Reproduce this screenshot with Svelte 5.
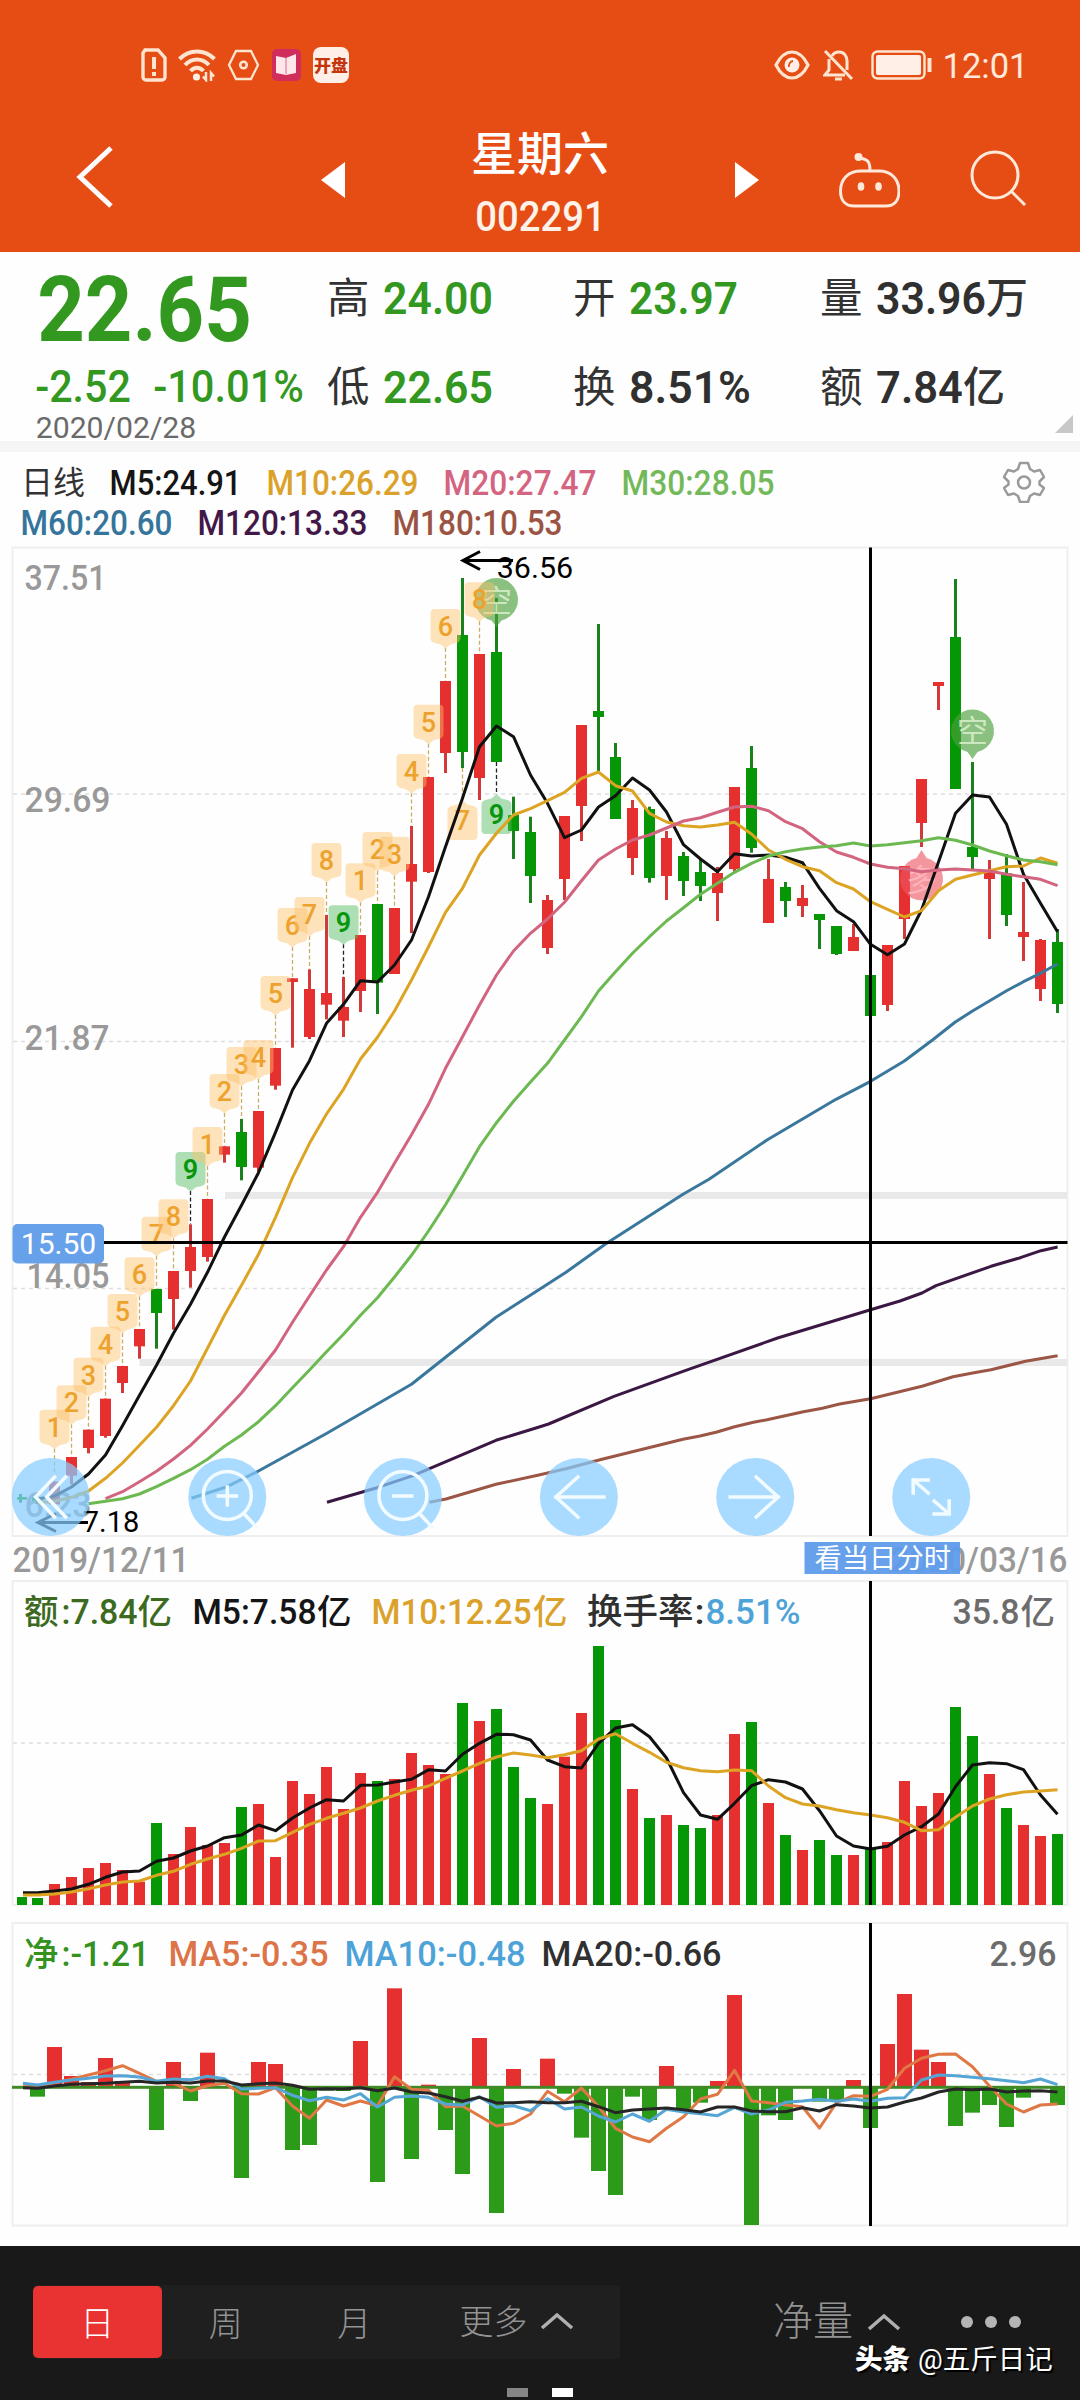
<script>
  // Horizontal slot of trading day i, shared by all three panels
  const X = (i) => 20.5 + 17 * i;
  const barX = (i, w) => Math.max(17, X(i) - w / 2);
  const barW = (i, w) => X(i) + w / 2 - barX(i, w) + (i === 0 ? 1 : 0);
  const line = (values, start = 0) =>
    values.map((v, k) => `${Math.max(23, X(k + start)).toFixed(1)},${(v / 3).toFixed(1)}`).join(' ');
  const path = (pts) => pts.map(([x, v]) => `${x},${(v / 3).toFixed(1)}`).join(' ');

  // [direction, high, body top, body bottom, low] in third-pixels below the panel top
  const candles = [
    ['g', 2862, 2871, 2879, 2888], ['g', 2868, 2872, 2882, 2892], ['r', 2825, 2825, 2893, 2893],
    ['r', 2751, 2751, 2807, 2833], ['r', 2669, 2669, 2724, 2740], ['r', 2576, 2576, 2688, 2693],
    ['r', 2478, 2478, 2529, 2559], ['r', 2367, 2367, 2419, 2456], ['g', 2247, 2247, 2319, 2426],
    ['r', 2193, 2193, 2277, 2369], ['r', 2053, 2121, 2193, 2243], ['r', 1977, 1977, 2151, 2165],
    ['r', 1819, 1819, 1844, 1868], ['g', 1737, 1776, 1881, 1921], ['r', 1713, 1713, 1883, 1895],
    ['r', 1524, 1524, 1637, 1649], ['r', 1315, 1315, 1326, 1523], ['r', 1288, 1347, 1491, 1497],
    ['r', 1125, 1359, 1394, 1438], ['r', 1311, 1401, 1442, 1491], ['r', 1185, 1185, 1353, 1416],
    ['g', 1092, 1092, 1328, 1422], ['r', 1104, 1104, 1302, 1302], ['r', 858, 972, 1025, 1179],
    ['r', 711, 711, 996, 999], ['r', 423, 423, 639, 699], ['g', 114, 285, 636, 684],
    ['r', 342, 342, 714, 780], ['g', 174, 336, 666, 666], ['g', 770, 825, 873, 957],
    ['g', 830, 876, 1008, 1089], ['r', 1065, 1080, 1224, 1242], ['r', 828, 828, 1017, 1080],
    ['r', 555, 555, 798, 903], ['g', 252, 513, 531, 695], ['g', 609, 651, 837, 837],
    ['r', 780, 804, 954, 1005], ['g', 800, 807, 1014, 1028], ['r', 873, 894, 1008, 1080],
    ['g', 936, 948, 1023, 1068], ['g', 960, 996, 1038, 1083], ['r', 981, 999, 1059, 1143],
    ['r', 741, 741, 987, 995], ['g', 618, 684, 924, 938], ['r', 957, 1017, 1149, 1149],
    ['g', 1026, 1041, 1083, 1131], ['r', 1035, 1074, 1098, 1131], ['g', 1122, 1122, 1140, 1227],
    ['g', 1158, 1158, 1242, 1245], ['r', 1152, 1191, 1233, 1233], ['g', 1305, 1305, 1428, 1428],
    ['r', 1215, 1215, 1395, 1413], ['r', 978, 978, 1137, 1197], ['r', 717, 717, 849, 921],
    ['r', 426, 426, 438, 510], ['g', 117, 291, 747, 747], ['g', 666, 921, 951, 990],
    ['r', 960, 995, 1017, 1197], ['g', 942, 1000, 1125, 1158], ['r', 1026, 1176, 1191, 1263],
    ['r', 1197, 1200, 1347, 1383], ['g', 1167, 1206, 1392, 1419]
  ];

  const ma5 = [2877, 2868, 2841, 2802, 2745, 2657, 2566, 2476, 2380, 2293, 2197, 2091, 1996, 1898, 1777, 1650, 1562, 1450, 1393, 1322, 1326, 1275, 1200, 1070, 920, 775, 620, 558, 590, 705, 790, 893, 870, 801, 767, 714, 750, 816, 914, 957, 995, 941, 948, 945, 952, 968, 1045, 1112, 1145, 1213, 1244, 1212, 1110, 966, 820, 765, 771, 853, 1003, 1090, 1175];
  const ma10 = [2888, 2884, 2872, 2853, 2815, 2769, 2716, 2662, 2597, 2523, 2425, 2326, 2236, 2143, 2032, 1913, 1810, 1722, 1648, 1557, 1492, 1413, 1320, 1220, 1117, 1045, 945, 880, 825, 806, 782, 757, 715, 696, 737, 753, 820, 846, 857, 861, 855, 847, 882, 930, 958, 980, 992, 1028, 1047, 1085, 1108, 1131, 1112, 1052, 1018, 1005, 992, 980, 978, 954, 970];
  const ma20 = [2876, 2855, 2825, 2794, 2757, 2716, 2667, 2614, 2559, 2495, 2430, 2347, 2268, 2190, 2120, 2032, 1957, 1870, 1784, 1693, 1585, 1490, 1395, 1305, 1233, 1180, 1137, 1087, 1022, 960, 927, 900, 885, 864, 843, 833, 817, 801, 799, 812, 845, 866, 905, 936, 952, 972, 982, 986, 995, 990, 987, 990, 993, 1003, 1010, 1018, 1037];
  const ma30 = [2891, 2884, 2876, 2862, 2840, 2815, 2789, 2758, 2719, 2685, 2645, 2597, 2543, 2490, 2435, 2383, 2326, 2273, 2211, 2146, 2073, 1994, 1908, 1820, 1748, 1684, 1626, 1570, 1500, 1430, 1353, 1295, 1240, 1190, 1143, 1103, 1063, 1030, 997, 970, 948, 935, 927, 921, 917, 909, 918, 914, 908, 902, 893, 901, 915, 933, 947, 960, 965, 974];
  const ma60 = [[191.5, 2875], [227, 2840], [258, 2794], [326, 2681], [411.5, 2533], [496, 2332], [540, 2247], [566, 2197], [605.5, 2112], [683, 1963], [709, 1918], [767, 1800], [836, 1678], [870.6, 1624], [904, 1564], [932.5, 1500], [955.3, 1446], [972.5, 1413], [1006.6, 1352], [1023.5, 1325], [1040.4, 1300], [1057.6, 1272]];
  const ma120 = [[327, 2887], [377, 2843], [413, 2807], [496, 2701], [540, 2660], [548.6, 2652], [614, 2569], [683, 2494], [777.6, 2394], [870.6, 2309], [900, 2283], [922, 2259], [936, 2237], [991, 2179], [1020.4, 2153], [1041, 2132], [1057.6, 2121]];
  const ma180 = [[429.4, 2887], [446, 2877], [496, 2833], [540, 2804], [566, 2786], [602, 2758], [683, 2698], [700, 2688], [717, 2676], [734.6, 2660], [753.5, 2647], [767, 2639], [803.4, 2615], [822.4, 2605], [839.6, 2592], [870.6, 2576], [922, 2539], [953, 2510], [974, 2498], [991, 2489], [1025.5, 2464], [1057.6, 2447]];

  // [day, label, top of the tag]
  const tags = [
    [2, 1, 2609], [3, 2, 2536], [4, 3, 2453], [5, 4, 2360], [6, 5, 2262], [7, 6, 2152], [8, 7, 2030], [9, 8, 1978], [10, 9, 1836],
    [11, 1, 1761], [12, 2, 1602], [13, 3, 1521], [14, 4, 1500], [15, 5, 1308], [16, 6, 1104], [17, 7, 1071], [18, 8, 909], [19, 9, 1096],
    [20, 1, 970], [21, 2, 876], [22, 3, 890], [23, 4, 642], [24, 5, 494], [25, 6, 207], [27, 8, 127]
  ];
  const lowTags = [[26, 7, 780], [28, 9, 762]];

  const volume = [981, 984, 942, 921, 894, 879, 900, 935, 759, 852, 771, 825, 819, 711, 702, 861, 633, 672, 591, 717, 609, 633, 627, 549, 585, 612, 399, 453, 417, 591, 684, 702, 560, 429, 228, 450, 657, 744, 735, 765, 774, 735, 492, 456, 699, 795, 840, 810, 855, 855, 835, 816, 633, 708, 669, 411, 498, 612, 714, 765, 798, 792];
  const vol5 = [968, 968, 963, 957, 943, 922, 906, 903, 874, 864, 843, 828, 803, 795, 765, 782, 744, 714, 689, 693, 646, 645, 636, 628, 599, 603, 553, 520, 493, 494, 510, 570, 590, 594, 520, 474, 464, 500, 564, 668, 735, 748, 700, 647, 629, 636, 657, 722, 798, 828, 837, 829, 795, 770, 732, 650, 585, 578, 581, 599, 675, 733];
  const vol10 = [975, 975, 972, 966, 956, 945, 936, 933, 916, 904, 883, 867, 853, 835, 813, 812, 787, 763, 745, 730, 714, 693, 676, 661, 648, 625, 603, 580, 561, 549, 555, 563, 554, 542, 507, 491, 520, 547, 577, 593, 602, 605, 600, 602, 648, 683, 702, 708, 719, 728, 735, 743, 757, 782, 779, 742, 708, 687, 674, 666, 663, 659];

  // Outer edge of each net-flow bar; the zero axis sits at 532
  const ZERO = 532;
  const net = [532, 560, 411, 498, 516, 444, 513, 532, 660, 456, 573, 428, 532, 804, 456, 462, 720, 705, 542, 543, 393, 816, 235, 747, 524, 660, 792, 384, 909, 477, 532, 446, 551, 683, 783, 855, 560, 630, 468, 600, 578, 513, 255, 945, 616, 630, 532, 575, 575, 510, 654, 402, 252, 419, 456, 648, 608, 585, 651, 563, 532, 585];
  const net5 = [522, 528, 518, 508, 495, 482, 467, 490, 514, 520, 543, 527, 520, 551, 552, 533, 588, 625, 570, 588, 573, 587, 500, 538, 541, 590, 588, 618, 648, 640, 612, 544, 575, 534, 590, 655, 681, 695, 655, 620, 567, 553, 481, 573, 578, 585, 590, 654, 578, 557, 559, 538, 475, 445, 433, 432, 470, 528, 582, 606, 585, 582];
  const net10 = [520, 525, 517, 510, 505, 498, 497, 501, 514, 507, 509, 499, 506, 537, 535, 533, 556, 572, 562, 570, 551, 591, 562, 558, 562, 582, 585, 560, 592, 587, 602, 566, 597, 591, 618, 636, 612, 634, 598, 606, 611, 617, 592, 612, 600, 577, 573, 568, 574, 567, 574, 565, 563, 510, 495, 497, 502, 506, 512, 518, 507, 524];
  const net20 = [533, 535, 528, 523, 521, 520, 517, 514, 519, 517, 519, 513, 513, 525, 521, 519, 526, 538, 536, 537, 533, 542, 534, 546, 549, 560, 574, 562, 579, 578, 575, 578, 578, 574, 590, 608, 600, 597, 594, 599, 606, 591, 591, 603, 605, 605, 593, 603, 584, 588, 594, 591, 576, 564, 546, 537, 539, 537, 546, 543, 542, 546];

  const CAP = 0.711;
  const stats = [
    { label: '高', value: '24.00', w: 106, tone: 'down' },
    { label: '开', value: '23.97', w: 105, tone: 'down' },
    { label: '量', value: '33.96', w: 106, unit: '万', tone: 'dark' },
    { label: '低', value: '22.65', w: 106, tone: 'down' },
    { label: '换', value: '8.51%', w: 118, tone: 'dark' },
    { label: '额', value: '7.84', w: 83, unit: '亿', tone: 'dark' }
  ];
  const legend1 = [['M5:24.91', 129, 'c-black'], ['M10:26.29', 149, 'c-gold'], ['M20:27.47', 150, 'c-pink'], ['M30:28.05', 150, 'c-lime']];
  const legend2 = [['M60:20.60', 149, 'c-blue'], ['M120:13.33', 167, 'c-plum'], ['M180:10.53', 167, 'c-brown']];
  const buttons = [50.6, 227.3, 402.9, 578.9, 755.2, 931.2];
</script>

<!-- Text in flow, sized by its cap height and fitted to a width; side bearings hang outside the box -->
{#snippet fit(str, w, cap, cls)}
  <svg class="fit {cls}" width={w} height={cap}>
    <text x={-cap * 0.06} y={cap} font-size={cap / CAP} textLength={w + cap * 0.12} lengthAdjust="spacingAndGlyphs">{str}</text>
  </svg>
{/snippet}

<!-- Text on a chart, x and baseline given -->
{#snippet label(str, x, y, w, cap, cls)}
  <text class={cls} x={x - cap * 0.06} {y} font-size={cap / CAP} textLength={w + cap * 0.12} lengthAdjust="spacingAndGlyphs">{str}</text>
{/snippet}

{#snippet han(str, x, y, size, cls)}
  <text class={cls} {x} {y} font-size={size}>{str}</text>
{/snippet}

<div class="screen">
  <header>
    <div class="status">
      <div class="group">
        <svg width="26" height="34" viewBox="0 0 26 34" class="ico"><path d="M4 2h13l7 8v19a3 3 0 0 1-3 3H5a3 3 0 0 1-3-3V5z" stroke-width="3.400" /><path d="M13 9v12M13 24v4" stroke-width="4" /></svg>
        <svg width="38" height="34" viewBox="0 0 38 34" class="ico"><path d="M1.500 11c10-10 25-10 35 0M7 17c7-7.500 17-7.500 24 0M12.500 23c4-4.500 9-4.500 13 0" stroke-width="4" /><circle cx="18.500" cy="29" r="3.600" class="solid" /><path d="M28 24v8l-3-3.500M33 33v-8l3 3.500" stroke-width="2.500" /></svg>
        <svg width="33" height="34" viewBox="0 0 33 34" class="ico"><path d="M9 3h15l7 14-7 14H9L2 17z" stroke-width="2.300" /><circle cx="16.500" cy="17" r="3.300" stroke-width="2.600" /></svg>
        <svg width="31" height="34" viewBox="0 0 31 34"><rect x="1" y="1" width="29" height="32" rx="5" fill="#d02c5c" /><path d="M5 8l10 2 10-4v19l-10 2-10-2z" fill="#ffe6ea" /><path d="M15 10v16" stroke="#e590a8" stroke-width="1.500" /></svg>
        <div class="app">开盘</div>
      </div>
      <div class="group right">
        <svg width="36" height="30" viewBox="0 0 36 30" class="ico eye"><path d="M2 15C7 5 12 2 18 2s11 3 16 13C29 25 24 28 18 28S7 25 2 15z" stroke-width="3.200" /><circle cx="18" cy="15" r="7.500" class="solid" /><path d="M15 17a5 5 0 0 1 4-6" stroke="#e54d14" stroke-width="1.800" /></svg>
        <svg width="31" height="34" viewBox="0 0 31 34" class="ico bell"><path d="M9 8c2-4 5-4 7-4 5 0 8 4 8 9v9M6 11v11l-4 5h20" stroke-width="3" /><path d="M2 3l27 28" stroke-width="3" /><path d="M12 31h7" stroke-width="3" /></svg>
        <svg width="61" height="30" viewBox="0 0 61 30" class="ico"><rect x="1.500" y="1.500" width="52" height="27" rx="5" stroke-width="2.400" /><rect x="5" y="5" width="45" height="20" rx="2" class="solid" /><path d="M58.500 8v14" stroke-width="4" /></svg>
        {@render fit('12:01', 83, 25, 'light')}
      </div>
    </div>
    <nav>
      <svg class="back" width="40" height="64" viewBox="0 0 40 64"><path d="M36 3L5 32l31 29" /></svg>
      <svg class="tri" width="24" height="36" viewBox="0 0 24 36"><path d="M24 0v36L0 18z" /></svg>
      <div class="title">
        <div class="name">星期六</div>
        {@render fit('002291', 127, 30, 'code')}
      </div>
      <svg class="tri" width="24" height="36" viewBox="0 0 24 36"><path d="M0 0v36l24-18z" /></svg>
      <svg class="robot" width="61" height="56" viewBox="0 0 61 56"><path d="M22 19h18c12 0 20 8 20 20 0 10-5 15-13 15H15C7 54 1.500 49 1.500 39c0-12 8-20 20.500-20zM31 19c0-8-1-12-11-13" /><circle cx="19.500" cy="5" r="4" class="dot" /><ellipse cx="22" cy="34.500" rx="3.300" ry="4.300" class="dot" /><ellipse cx="39.500" cy="34.500" rx="3.300" ry="4.300" class="dot" /></svg>
      <svg class="search" width="58" height="58" viewBox="0 0 58 58"><circle cx="25" cy="25" r="23" /><path d="M41 41l14 14" /></svg>
    </nav>
  </header>

  <section class="quote">
    <div class="last">
      <div class="price">{@render fit('22.65', 207, 64, 'down heavy')}</div>
      <div class="change">
        {@render fit('-2.52', 92, 31, 'down')}
        {@render fit('-10.01%', 147, 31, 'down')}
      </div>
      {@render fit('2020/02/28', 158, 21, 'date')}
    </div>
    <div class="stats">
      {#each stats as s}
        <div class="stat">
          <span class="key">{s.label}</span>
          {@render fit(s.value, s.w, 32, s.tone + ' bold')}
          {#if s.unit}<span class="unit">{s.unit}</span>{/if}
        </div>
      {/each}
    </div>
    <svg class="corner" width="18" height="18" viewBox="0 0 18 18"><path d="M18 0v18H0z" fill="#c8c8c8" /></svg>
  </section>

  <section class="legend">
    <div class="row first">
      <span class="period">日线</span>
      {#each legend1 as [s, w, c]}{@render fit(s, w, 24.5, c)}{/each}
      <svg class="gear" width="42" height="42" viewBox="0 0 42 42"><path d="M17 2h8l2 6 4 2.500 6-1.500 4 7-4.500 4.500v3L41 27l-4 7-6-1.500L27 35l-2 6h-8l-2-6-4-2.500L5 34l-4-7 4.500-3.500v-3L1 16l4-7 6 1.500L15 8z" /><circle cx="21" cy="21.500" r="6" /></svg>
    </div>
    <div class="row second">
      {#each legend2 as [s, w, c]}{@render fit(s, w, 24.5, c)}{/each}
    </div>
  </section>

  <svg class="chart" width="1080" height="1040" viewBox="0 0 1080 1040">
    <rect class="frame" x="12.500" y="7.500" width="1055" height="988.500" />
    <path class="grid" d="M13 254H1067M13 501.500H1067M13 748.500H1067" />
    <rect x="225" y="652" width="842" height="7" class="gap" />
    <rect x="139.500" y="819" width="928" height="7" class="gap" />

    {@render label('37.51', 26, 50, 79, 25, 'axis')}
    {@render label('29.69', 26, 272, 83, 25, 'axis')}
    {@render label('21.87', 26, 509.5, 82, 25, 'axis')}
    {@render label('14.05', 28, 748, 80, 24.5, 'axis')}
    {@render label('6.23', 26, 977, 64, 24.5, 'axis')}

    {#each tags as [d, n, top]}
      <path class="lead" class:nine={n === 9} d="M{X(d)} {top / 3 + 39}V{candles[d][1] / 3}" />
    {/each}
    <path class="lead" d="M{X(26)} 228V260" />
    <path class="lead nine" d="M{X(28)} 222V254" />

    {#each candles as [c, hi, a, b, lo], i}
      <g class={c}>
        <rect x={X(i) - 1.5} y={hi / 3} width="3" height={(lo - hi) / 3} class="wick" />
        <rect x={barX(i, 11)} y={a / 3} width={barW(i, 11)} height={(b - a) / 3} />
      </g>
    {/each}

    <g class="tag mark">
      <path class="bear" d="M{X(28)} 87l-5-6.500a21.500 21.500 0 1 1 10 0z" />
      <text x={X(28)} y="72">空</text>
      <path class="bear" d="M972.500 219l-5-7a21.500 21.500 0 1 1 10 0z" />
      <text x="972.500" y="202">空</text>
      <path class="bull" d="M921.500 310l5 8a21.500 21.500 0 1 1 -10 0z" />
      <text class="on-bull" x="921.500" y="351">多</text>
    </g>

    {#each tags as [d, n, top]}
      <g class="tag" class:nine={n === 9} transform="translate({X(d)} {top / 3})">
        <path d="M-11 0h22q4 0 4 4v25q0 4-4 5l-6 1.500-5 4-5-4-6-1.500q-4-1-4-5v-25q0-4 4-4z" />
        <text y="27">{n}</text>
      </g>
    {/each}
    {#each lowTags as [d, n, top]}
      <g class="tag" class:nine={n === 9} transform="translate({X(d)} {top / 3})">
        <path d="M-11 40h22q4 0 4-4v-25q0-4-4-5l-6-1.500-5-4.500-5 4.500-6 1.500q-4 1-4 5v25q0 4 4 4z" />
        <text y="30">{n}</text>
      </g>
    {/each}

    <g class="lines">
      <polyline points={line(ma5, 1)} class="s-black" />
      <polyline points={line(ma10, 1)} class="s-gold" />
      <polyline points={line(ma20, 5)} class="s-pink" />
      <polyline points={line(ma30, 4)} class="s-lime" />
      <polyline points={path(ma60)} class="s-blue" />
      <polyline points={path(ma120)} class="s-plum" />
      <polyline points={path(ma180)} class="s-brown" />
    </g>

    <path class="arrow" d="M513 20.500H463M480 11.500L463 20.500L480 29.500M88 982.500H38M56 973.500L38 982.500L56 991.500" />
    {@render label('36.56', 498, 37.5, 74, 20.7, 'extreme')}
    {@render label('7.18', 84, 992, 54, 20.7, 'extreme')}

    {#each buttons as cx, i}
      <g class="btn" transform="translate({cx} 957)">
        <circle r="39" />
        {#if i === 0}
          <path d="M4-20L-15 0L4 20M15-20L-4 0L15 20" />
        {:else if i < 3}
          <circle class="lens" cy="-1.500" r="24" />
          <path d="M17 17l12 13M-9-1H9" />
          {#if i === 1}<path d="M0-10V8" />{/if}
        {:else if i === 3}
          <path d="M25 0H-23M-1-20L-23 0L-1 20" />
        {:else if i === 4}
          <path d="M-25 0H23M1-20L23 0L1 20" />
        {:else}
          <path d="M-3-4L-18-17M-18-4V-17H-3M3 4L18 17M18 4V17H3" />
        {/if}
      </g>
    {/each}

    <path class="cross" d="M870.500 7.500V996M104 702.500H1067.500" />
    <rect x="12.500" y="684" width="91.500" height="39.500" rx="5" class="price-tag" />
    {@render label('15.50', 22, 714, 73, 21, 'white')}

    {@render label('2019/12/11', 14, 1032, 174, 25, 'axis')}
    {@render label('2020/03/16', 892, 1032, 174, 25, 'axis')}
    <rect x="804.500" y="1002" width="155.500" height="32" class="jump" />
    {@render han('看当日分时', 814.5, 1028, 27.3, 'white')}
  </svg>

  <svg class="chart" width="1080" height="340" viewBox="0 0 1080 340">
    <rect class="frame" x="12.500" y="1" width="1055" height="324" />
    <path class="grid" d="M13 163H1067" />
    {#each volume as v, i}
      <rect class={candles[i][0]} x={barX(i, 11)} y={v / 3 - 10} width={barW(i, 11)} height={(1005 - v) / 3} />
    {/each}
    <g class="lines" transform="translate(0 -10)">
      <polyline points={line(vol5)} class="s-black" />
      <polyline points={line(vol10)} class="s-gold" />
    </g>
    <path class="cross" d="M870.500 1V325" />
    {@render han('额', 24, 44, 34.5, 'c-forest')}
    {@render label(':7.84', 63, 43.5, 73, 25.5, 'c-forest')}
    {@render han('亿', 137.5, 44, 34.5, 'c-forest')}
    {@render label('M5:7.58', 194, 43.5, 121, 25.5, 'c-black')}
    {@render han('亿', 317, 44, 34.5, 'c-black')}
    {@render label('M10:12.25', 373, 43.5, 157, 25.5, 'c-gold')}
    {@render han('亿', 533, 44, 34.5, 'c-gold')}
    {@render han('换手率', 587, 44, 35.5, 'c-dark')}
    {@render label(':', 696, 43.5, 7, 25.5, 'c-dark')}
    {@render label('8.51%', 707, 43.5, 92, 25.5, 'c-sky')}
    {@render label('35.8', 954, 43.5, 64, 25.5, 'c-grey')}
    {@render han('亿', 1020.5, 44, 34.5, 'c-grey')}
  </svg>

  <svg class="chart" width="1080" height="326" viewBox="0 10 1080 326">
    <rect class="frame" x="12.500" y="13" width="1055" height="302.500" />
    <path class="grid" d="M13 164.500H1067" />
    {#each net as v, i}
      {#if v < ZERO}
        <rect class="r" x={X(i) - 7.5} y={v / 3} width="15" height={(ZERO - v) / 3} />
      {:else if v > ZERO}
        <rect class="net-down" x={X(i) - 7.5} y={ZERO / 3} width="15" height={(v - ZERO) / 3} />
      {/if}
    {/each}
    <rect x="12" y="175.800" width="1053" height="3" fill="#3f8a25" />
    <g class="lines">
      <polyline points={line(net5)} class="s-orange" />
      <polyline points={line(net10)} class="s-sky" />
      <polyline points={line(net20)} class="s-dark" />
    </g>
    <path class="cross" d="M870.500 13V316" />
    {@render han('净', 24, 56, 34.5, 'c-green')}
    {@render label(':-1.21', 63, 55.7, 85, 25.5, 'c-green')}
    {@render label('MA5:-0.35', 170, 55.7, 157, 25.5, 'c-orange')}
    {@render label('MA10:-0.48', 346, 55.7, 178, 25.5, 'c-sky')}
    {@render label('MA20:-0.66', 543, 55.7, 177, 25.5, 'c-dark')}
    {@render label('2.96', 991, 55.7, 64, 25.5, 'c-grey')}
  </svg>

  <footer>
    <div class="tabs">
      <div class="tab on">日</div>
      <div class="tab">周</div>
      <div class="tab">月</div>
      <div class="tab more">更多 <svg width="34" height="18" viewBox="0 0 34 18" class="chev"><path d="M2 16L17 3l15 13" /></svg></div>
    </div>
    <div class="metric">净量 <svg width="34" height="18" viewBox="0 0 34 18" class="chev"><path d="M2 16L17 3l15 13" /></svg></div>
    <div class="dots"><i></i><i></i><i></i></div>
    <div class="credit"><b>头条</b><span>@五斤日记</span></div>
    <div class="pager"><i></i><i class="now"></i></div>
  </footer>
</div>

<style>
  :global(body) { margin: 0; background: #fefefe; }
  .screen {
    width: 1080px; height: 2400px; display: flex; flex-direction: column; overflow: hidden;
    background: #fefefe; font-family: Roboto, 'Noto Sans CJK SC', sans-serif; color: #333;
  }
  svg { display: block; flex: none; }
  .fit { overflow: visible; font-weight: 500; }
  text { white-space: pre; }

  header { height: 252px; background: #e54d14; color: #fff2e8; display: flex; flex-direction: column; flex: none; }
  .status { height: 130px; padding: 0 53px 0 141px; display: flex; justify-content: space-between; align-items: center; }
  .group { display: flex; align-items: center; gap: 11px; }
  .right { gap: 12px; }
  .bell { margin: 0 5px 0 1px; }
  .ico { fill: none; stroke: #ffe4cf; }
  .ico .solid { fill: #ffefe6; stroke: none; }
  .app { width: 36px; height: 36px; border-radius: 8px; background: #ffefe6; color: #c4350c; font: 900 17px/36px 'Noto Sans CJK SC', sans-serif; text-align: center; }
  .light { fill: #ffe9da; font-weight: 400; }
  nav {
    height: 122px; display: grid; align-items: center;
    grid-template-columns: 321px 24px 390px 24px 80px 61px 70px 56px;
  }
  nav > :nth-child(5) { grid-column: 6; }
  nav > :nth-child(6) { grid-column: 8; }
  .back { margin: -28px 0 0 75px; fill: none; stroke: #fff; stroke-width: 5; }
  .tri { fill: #fff; margin-top: -22px; }
  .title { display: flex; flex-direction: column; align-items: center; height: 122px; }
  .name { font-size: 46px; line-height: 48px; height: 71px; font-weight: 500; color: #fff; }
  .title .name { box-sizing: border-box; }
  .code { fill: #fff2e8; }
  .robot { fill: none; stroke: #ffe9da; stroke-width: 3; margin-top: -23px; }
  .robot .dot { fill: #ffe9da; stroke: none; }
  .search { fill: none; stroke: #ffe9da; stroke-width: 3; margin-top: -24px; }

  .quote { height: 189px; display: flex; position: relative; flex: none; border-bottom: 11px solid #f5f5f5; box-sizing: content-box; }
  .last { width: 290px; padding: 25px 0 0 37px; box-sizing: content-box; }
  .price { padding-left: 4px; margin-bottom: 30px; }
  .change { display: flex; gap: 26px; margin-bottom: 15px; }
  .down { fill: #33981f; }
  .dark { fill: #303030; }
  .heavy { font-weight: 700; }
  .bold { font-weight: 600; }
  .date { fill: #6a6a6a; font-weight: 400; }
  .stats { display: grid; grid-template-columns: 246px 247px 240px; grid-auto-rows: 64px; row-gap: 25px; padding-top: 14px; }
  .stat { display: flex; align-items: center; }
  .key { font-size: 42.500px; line-height: 64px; width: 58px; padding-top: 2px; }
  .unit { font-size: 42px; line-height: 64px; font-weight: 500; margin-left: 2px; padding-top: 1px; }
  .corner { position: absolute; right: 7px; bottom: 8px; }

  .legend { height: 88px; padding: 7px 35px 0 22px; box-sizing: border-box; flex: none; }
  .row { display: flex; align-items: center; gap: 28px; }
  .first { height: 46px; }
  .second { height: 35px; }
  .period { font-size: 32px; line-height: 46px; margin: 0 -2px 0 -1px; padding-top: 1px; }
  .gear { margin-left: auto; fill: none; stroke: #9a9a9a; stroke-width: 2.500; stroke-linejoin: round; }

  .chart { font-weight: 500; }
  .frame { fill: none; stroke: #efefef; stroke-width: 2; }
  .grid { stroke: #dedede; stroke-width: 1.700; stroke-dasharray: 4 4; fill: none; }
  .gap { fill: #e9e9e9; }
  .axis { fill: #999; }
  .r { fill: #e63030; }
  .g { fill: #059705; }
  g.r .wick { fill: #d23a3a; }
  g.g .wick { fill: #1a821d; }
  .net-down { fill: #2d9b1a; }
  .lead { stroke: #c9ae66; stroke-width: 1.300; stroke-dasharray: 4 2.500; }
  .lead.nine { stroke: #222; }
  .tag path { fill: #fcc168; fill-opacity: 0.45; }
  .tag text { fill: #eda22d; font-size: 27px; text-anchor: middle; font-weight: 500; }
  .tag.nine path { fill: #57bd62; fill-opacity: 0.48; }
  .tag.nine text { fill: #07960d; font-weight: 600; }
  .mark .bear { fill: #4d9f3c; fill-opacity: 0.65; }
  .mark .bull { fill: #ee5562; fill-opacity: 0.62; }
  .mark text { fill: #d9f0cd; font-weight: 400; fill-opacity: 0.85; font-size: 31px; }
  .mark .on-bull { fill: #ffb9be; }

  .lines { fill: none; stroke-width: 3; stroke-linejoin: round; }
  .s-black { stroke: #111; }
  .s-gold { stroke: #dda323; }
  .s-pink { stroke: #d2647f; }
  .s-lime { stroke: #6cb952; }
  .s-blue { stroke: #3a779c; }
  .s-plum { stroke: #3b1844; }
  .s-brown { stroke: #9c5645; }
  .s-orange { stroke: #e07846; }
  .s-sky { stroke: #55a5d5; }
  .s-dark { stroke: #262626; }
  .c-black { fill: #151515; }
  .c-gold { fill: #dba22b; }
  .c-pink { fill: #d4647f; }
  .c-lime { fill: #73b95a; }
  .c-blue { fill: #35759b; }
  .c-plum { fill: #431849; }
  .c-brown { fill: #9b5444; }
  .c-orange { fill: #dc7448; }
  .c-sky { fill: #4da3d8; }
  .c-dark { fill: #303030; }
  .c-grey { fill: #6c6c6c; }
  .c-forest { fill: #3b6a20; }
  .c-green { fill: #35921f; }

  .arrow { fill: none; stroke: #000; stroke-width: 3; }
  .extreme { fill: #000; font-weight: 400; }
  .btn circle { fill: rgb(134 205 255 / 0.72); }
  .btn path { fill: none; stroke: #f2fbff; stroke-width: 3.500; stroke-linecap: square; }
  .btn circle.lens { fill: none; stroke: #f2fbff; stroke-width: 3.500; }
  .cross { stroke: #000; stroke-width: 3; fill: none; }
  .price-tag { fill: #66a1ea; }
  .jump { fill: #5f9bea; fill-opacity: 0.95; }
  .white { fill: #fff; font-weight: 400; }

  footer {
    flex: 1; background: #191919; color: #939393; display: grid; font-weight: 300;
    grid-template-columns: 33px 587px 153px 180px 1fr; grid-template-rows: 39px 74px 41px;
    position: relative;
  }
  .tabs { grid-area: 2 / 2; background: #1f1f1f; display: flex; align-items: center; font-size: 34px; font-weight: 300; border-radius: 4px; }
  .tab { width: 128.500px; text-align: center; line-height: 76px; height: 72px; }
  .on { background: #e93232; color: #fff; border-radius: 5px; }
  .more { width: 196px; display: flex; align-items: center; justify-content: center; gap: 12px; }
  .more .chev { margin-top: -2px; }
  .metric { grid-area: 2 / 4; font-size: 40px; display: flex; align-items: center; gap: 14px; line-height: 76px; }
  .chev { display: inline-block; fill: none; stroke: #b0b0b0; stroke-width: 3.500; }
  .dots { grid-area: 2 / 5; display: flex; align-items: center; gap: 12px; padding-left: 8px; }
  .dots i { width: 12px; height: 12px; border-radius: 50%; background: #b5b5b5; }
  .credit {
    position: absolute; left: 855px; top: 94px; display: flex; align-items: center; gap: 8px; color: #fff;
    font-size: 27.500px; line-height: 40px; font-weight: 400; text-shadow: 2px 2px 1px #000; white-space: nowrap;
  }
  .credit b { font-weight: 900; }
  .pager { grid-area: 3 / 1 / 4 / 6; display: flex; justify-content: center; gap: 24px; padding-top: 29px; }
  .pager i { width: 21px; height: 9px; background: #868686; }
  .pager .now { background: #fff; }
</style>
